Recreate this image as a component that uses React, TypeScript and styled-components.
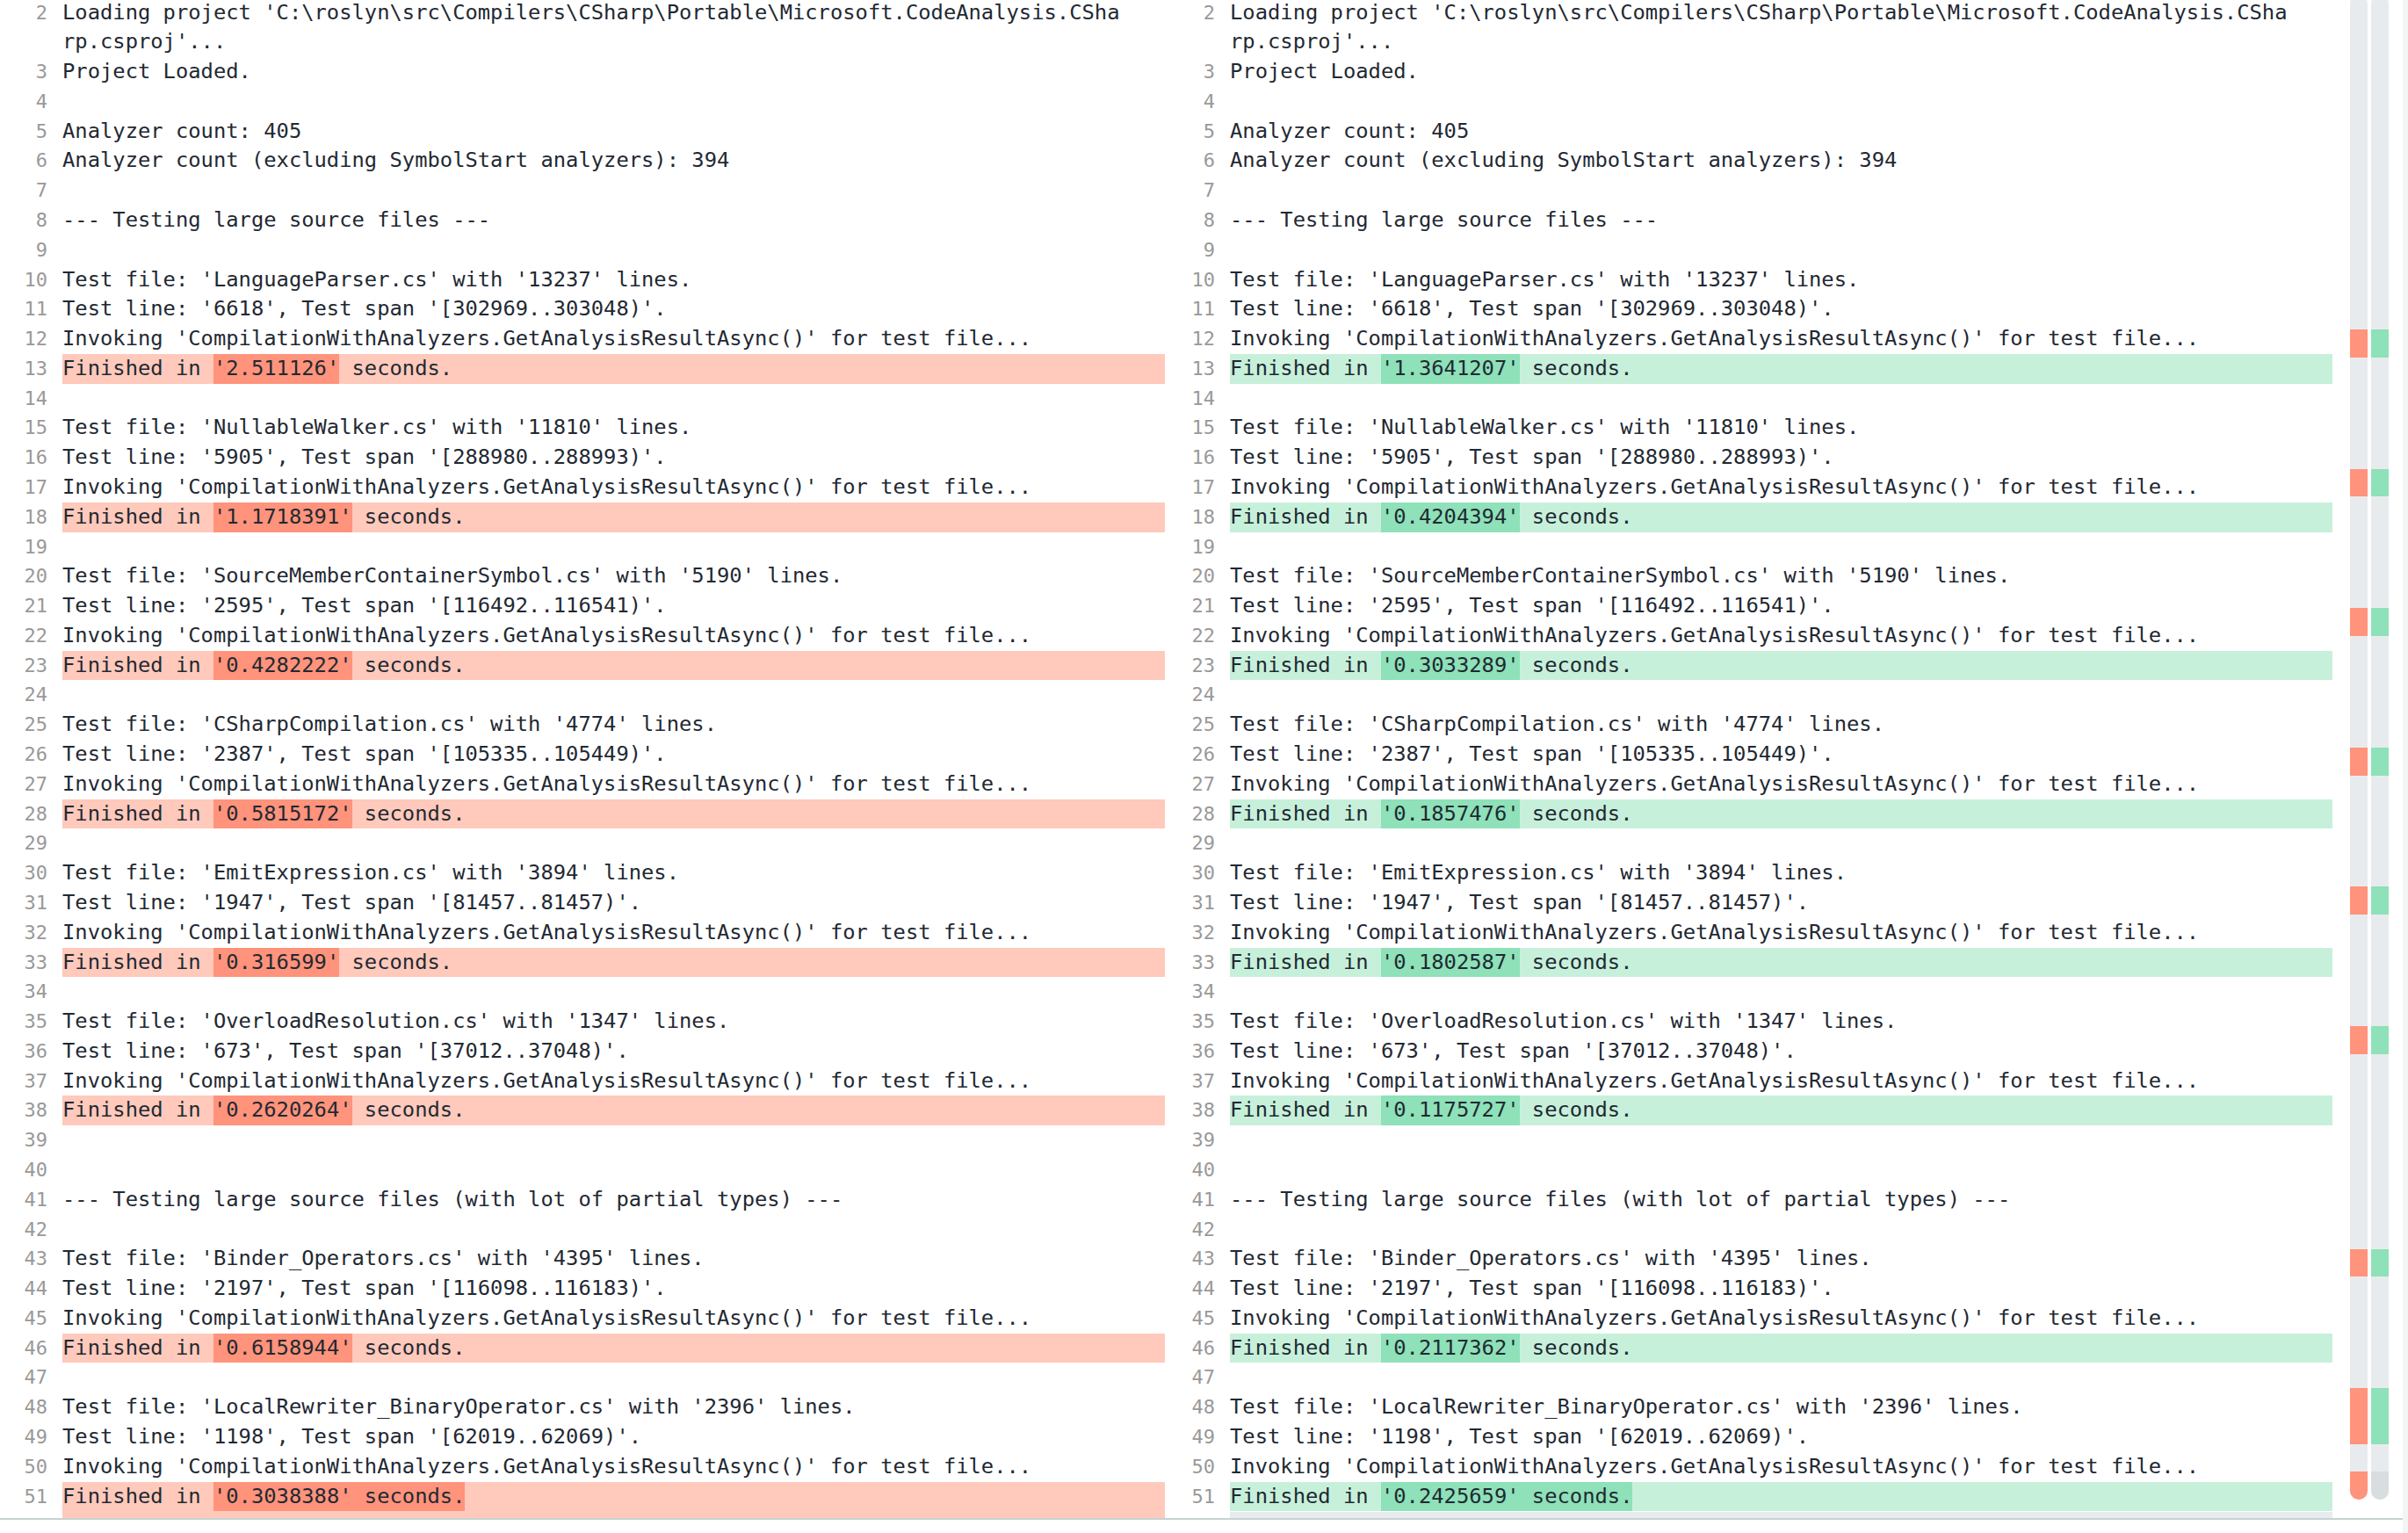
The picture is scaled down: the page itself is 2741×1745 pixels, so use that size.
import React from 'react';
import styled, { createGlobalStyle } from 'styled-components';

type Kind = 'del' | 'add';
interface Line {
  n: number | null;
  text: string;
  kind?: Kind;
  hl?: [number, number];
}

const LH = 33.78;
const RULER_PITCH = 31.72;

const GlobalStyle = createGlobalStyle`
  html, body {
    margin: 0;
    padding: 0;
    background: #ffffff;
    overflow: hidden;
  }
  body {
    font-family: "DejaVu Sans Mono", "Liberation Mono", monospace;
    font-size: 23.8px;
    color: #1f2933;
  }
`;

const Page = styled.div`
  display: flex;
  width: 2741px;
  height: 1745px;
  background: #ffffff;
`;

const Main = styled.div`
  display: flex;
  flex-direction: column;
  width: 2735px;
  height: 100%;
`;

const EdgeStrip = styled.div`
  width: 6px;
  height: 100%;
  background: #f3f4f4;
`;

const Editor = styled.div`
  display: flex;
  height: 1728px;
  overflow: hidden;
`;

const Divider = styled.div`
  height: 2px;
  background: #c8d1d3;
  flex-shrink: 0;
`;

const Pane = styled.div<{ $gap?: number }>`
  display: flex;
  flex-direction: column;
  width: 1326px;
  margin-right: ${(p) => p.$gap ?? 0}px;
  height: 100%;
  overflow: hidden;
  flex-shrink: 0;
`;

const Rows = styled.div`
  flex: 1;
  min-height: 0;
  overflow: hidden;
`;

const RowsInner = styled.div`
  margin-top: -2.5px;
`;

const HScroll = styled.div`
  height: 7px;
  margin-left: 71px;
  background: #e8ebee;
  flex-shrink: 0;
`;

const Row = styled.div`
  display: grid;
  grid-template-columns: 54px 1255px;
  column-gap: 17px;
  line-height: ${LH}px;
`;

const Num = styled.div`
  text-align: right;
  color: #999999;
  font-size: 22px;
  line-height: ${LH}px;
`;

const Code = styled.div<{ $kind?: Kind }>`
  min-height: ${LH}px;
  padding-right: 44px;
  white-space: pre-wrap;
  word-break: break-all;
  color: #1f2933;
  background: ${(p) =>
    p.$kind === 'del' ? '#ffc9bb' : p.$kind === 'add' ? '#c7f0da' : 'transparent'};
`;

const Mark = styled.span<{ $kind?: Kind }>`
  display: inline-block;
  white-space: pre;
  background: ${(p) => (p.$kind === 'del' ? '#ff937b' : '#8ee1b8')};
`;

const Ruler = styled.div`
  width: 80px;
  height: 100%;
  box-sizing: border-box;
  padding: 0 16px 0 20px;
  display: flex;
  gap: 4px;
  overflow: hidden;
  flex-shrink: 0;
`;

const Track = styled.div`
  width: 20px;
  margin-top: -5.64px;
  align-self: flex-start;
  display: flex;
  flex-direction: column;
  border-radius: 10px;
  overflow: hidden;
  background: #e8ebee;
`;

const Seg = styled.div<{ $c?: string }>`
  height: ${RULER_PITCH}px;
  flex-shrink: 0;
  background: ${(p) => p.$c ?? 'transparent'};
`;

interface Block {
  file: string;
  lines: string;
  tl: string;
  span: string;
}

const mainBlocks: Block[] = [
  { file: 'LanguageParser.cs', lines: '13237', tl: '6618', span: '[302969..303048)' },
  { file: 'NullableWalker.cs', lines: '11810', tl: '5905', span: '[288980..288993)' },
  { file: 'SourceMemberContainerSymbol.cs', lines: '5190', tl: '2595', span: '[116492..116541)' },
  { file: 'CSharpCompilation.cs', lines: '4774', tl: '2387', span: '[105335..105449)' },
  { file: 'EmitExpression.cs', lines: '3894', tl: '1947', span: '[81457..81457)' },
  { file: 'OverloadResolution.cs', lines: '1347', tl: '673', span: '[37012..37048)' },
];

const partialBlocks: Block[] = [
  { file: 'Binder_Operators.cs', lines: '4395', tl: '2197', span: '[116098..116183)' },
  { file: 'LocalRewriter_BinaryOperator.cs', lines: '2396', tl: '1198', span: '[62019..62069)' },
];

const leftTimes = ['2.511126', '1.1718391', '0.4282222', '0.5815172', '0.316599', '0.2620264', '0.6158944', '0.3038388'];
const rightTimes = ['1.3641207', '0.4204394', '0.3033289', '0.1857476', '0.1802587', '0.1175727', '0.2117362', '0.2425659'];

function buildSide(times: string[], kind: Kind): Line[] {
  const out: Line[] = [];
  let n = 2;
  const push = (text: string, extra?: Partial<Line>) => {
    out.push({ n: n++, text, ...extra });
  };
  push("Loading project 'C:\\roslyn\\src\\Compilers\\CSharp\\Portable\\Microsoft.CodeAnalysis.CSharp.csproj'...");
  push('Project Loaded.');
  push('');
  push('Analyzer count: 405');
  push('Analyzer count (excluding SymbolStart analyzers): 394');
  push('');
  push('--- Testing large source files ---');
  push('');
  let t = 0;
  const block = (b: Block, isLast: boolean) => {
    push(`Test file: '${b.file}' with '${b.lines}' lines.`);
    push(`Test line: '${b.tl}', Test span '${b.span}'.`);
    push("Invoking 'CompilationWithAnalyzers.GetAnalysisResultAsync()' for test file...");
    const time = times[t++];
    const text = `Finished in '${time}' seconds.`;
    const start = 12;
    const end = isLast ? text.length : start + time.length + 2;
    push(text, { kind, hl: [start, end] });
  };
  mainBlocks.forEach((b) => {
    block(b, false);
    push('');
  });
  push('');
  push('--- Testing large source files (with lot of partial types) ---');
  push('');
  partialBlocks.forEach((b, i) => {
    block(b, i === partialBlocks.length - 1);
    if (i < partialBlocks.length - 1) push('');
  });
  return out;
}

const leftLines: Line[] = [...buildSide(leftTimes, 'del'), { n: null, text: '', kind: 'del' }];
const rightLines: Line[] = buildSide(rightTimes, 'add');

const LineRow: React.FC<{ line: Line }> = ({ line }) => {
  const { text, hl, kind } = line;
  return (
    <Row>
      <Num>{line.n ?? ''}</Num>
      <Code $kind={kind}>
        {hl ? (
          <>
            {text.slice(0, hl[0])}
            <Mark $kind={kind}>{text.slice(hl[0], hl[1])}</Mark>
            {text.slice(hl[1])}
          </>
        ) : (
          text
        )}
      </Code>
    </Row>
  );
};

const markedLines = new Set([13, 18, 23, 28, 33, 38, 46, 51, 52]);

const RulerTrack: React.FC<{ color: string; lastColor: string }> = ({ color, lastColor }) => {
  const segs = [];
  for (let i = 1; i <= 54; i++) {
    let c: string | undefined;
    if (markedLines.has(i)) c = color;
    if (i === 54) c = lastColor;
    segs.push(<Seg key={i} $c={c} />);
  }
  return <Track>{segs}</Track>;
};

export default function App() {
  return (
    <>
      <GlobalStyle />
      <Page>
        <Main>
          <Editor>
            <Pane $gap={3}>
              <Rows>
                <RowsInner>
                  {leftLines.map((l, i) => (
                    <LineRow key={i} line={l} />
                  ))}
                </RowsInner>
              </Rows>
            </Pane>
            <Pane>
              <Rows>
                <RowsInner>
                  {rightLines.map((l, i) => (
                    <LineRow key={i} line={l} />
                  ))}
                </RowsInner>
              </Rows>
              <HScroll />
            </Pane>
            <Ruler>
              <RulerTrack color="#ff937b" lastColor="#ff937b" />
              <RulerTrack color="#8ee1b8" lastColor="#d8dde0" />
            </Ruler>
          </Editor>
          <Divider />
        </Main>
        <EdgeStrip />
      </Page>
    </>
  );
}
